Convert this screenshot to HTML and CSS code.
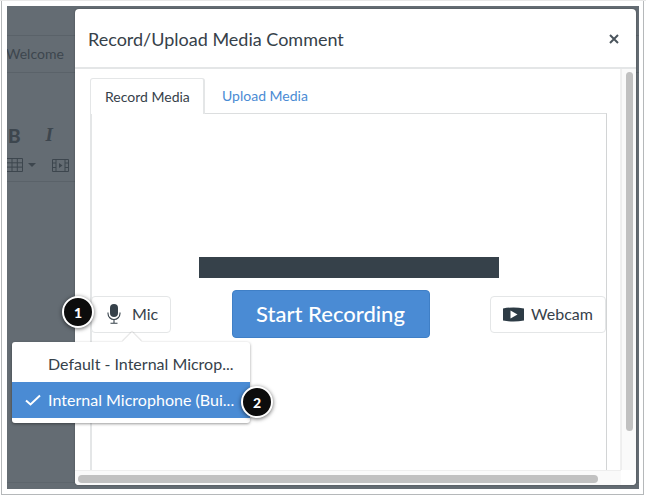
FILE: index.html
```html
<!DOCTYPE html>
<html lang="en">
<head>
<meta charset="utf-8">
<title>Record/Upload Media Comment</title>
<link rel="stylesheet" href="styles.css">
</head>
<body>
<div class="frame">
  <div class="screen">
    <div class="page">
      <div class="page-tab"><span>Welcome</span></div>
      <div class="editor-tools">
        <div class="tool-row tool-row-a"><b class="tool-b">B</b><i class="tool-i">I</i></div>
        <div class="tool-row tool-row-b">
          <svg class="tool-icon" width="16" height="14" viewBox="0 0 16 14"><path d="M0 .5h15.5v13H0M0 4.8h15.5M0 9.1h15.5M5 .5v13M10.3 .5v13" fill="none" stroke="#3d464e" stroke-width="1"/></svg>
          <svg class="tool-caret" width="8" height="4" viewBox="0 0 8 4"><path d="M0 0h8L4 4z" fill="#3d464e"/></svg>
          <svg class="tool-film" width="17" height="13" viewBox="0 0 17 13"><path d="M.5 .5h16v12H.5zM4 .5v12M13 .5v12M.5 4h3.500M.5 8.500h3.500M13 4h3.500M13 8.500h3.500" fill="none" stroke="#3d464e"/><path d="M7 4l3.500 2.500L7 9z" fill="#3d464e"/></svg>
        </div>
      </div>
      <div class="page-foot"></div>
    </div>

    <section class="dialog">
      <header class="dialog-head">
        <h1 class="dialog-title">Record/Upload Media Comment</h1>
        <svg class="close" width="10" height="10" viewBox="0 0 10 10"><path d="M1 1l8 8M9 1l-8 8" stroke="#4a545c" stroke-width="2" fill="none"/></svg>
      </header>
      <div class="dialog-scroll">
        <div class="dialog-body">
          <div class="tabs">
            <div class="tab tab-active">Record Media</div>
            <div class="tab tab-link">Upload Media</div>
          </div>
          <div class="panel">
            <div class="meter"></div>
            <div class="controls">
              <button class="btn btn-mic">
                <svg width="14" height="20" viewBox="0 0 14 20"><rect x="3" y="0" width="8" height="13" rx="4" fill="#36414a"/><path d="M1 8.500v1a6 6 0 0 0 12 0v-1M7 15.500V19M3.500 19.300h7" fill="none" stroke="#36414a" stroke-width="1.100"/></svg>
                <span class="btn-label">Mic</span>
              </button>
              <button class="btn-primary">Start Recording</button>
              <button class="btn btn-cam">
                <svg width="21" height="15" viewBox="0 0 21 15"><path d="M0 1.500Q10.500 -.5 21 1.500V13.500Q10.500 15.500 0 13.500z" fill="#2d3b45"/><path d="M7.500 3.500l7 4-7 4z" fill="#fff"/></svg>
                <span class="btn-label">Webcam</span>
              </button>
            </div>
          </div>
        </div>
        <div class="vbar"><div class="vthumb"></div></div>
        <div class="hbar"><div class="hthumb"></div></div>
        <div class="corner"></div>
      </div>
    </section>

    <div class="menu">
      <div class="menu-arrow"></div>
      <div class="menu-item menu-item-first">Default - Internal Microp...</div>
      <div class="menu-item menu-item-on">
        <svg class="check" width="16" height="12" viewBox="0 0 16 12"><path d="M1 6.500l4.500 4L15 1.500" fill="none" stroke="#fff" stroke-width="2"/></svg>
        <span class="menu-tight">Internal Microphone (Bui...</span>
      </div>
    </div>

    <div class="badge badge-one">1</div>
    <div class="badge badge-two">2</div>
  </div>
</div>
</body>
</html>
```
FILE: styles.css
```css
* { box-sizing: border-box; }
html, body { margin: 0; padding: 0; }
body { width: 646px; height: 497px; overflow: hidden; background: #fff; font-family: Lato, "Open Sans", sans-serif; color: #36414a; }

.frame {
  width: 646px; height: 497px;
  padding: 0 2px 2px 1px;
  border-top: 1px solid #e8e8e8;
}
.screen {
  position: relative;
  width: 643px; height: 494px;
  border: 1px solid #b5b8ba;
  border-top: 0;
  padding: 5px 4px 5px 5px;
  background: #fff;
}
.page {
  width: 100%; height: 100%;
  background: #646c73;
  color: #3d464e;
  overflow: hidden;
}
.page-tab {
  margin-top: 29px; height: 38px;
  border-top: 1px solid #5a6269; border-bottom: 1px solid #5a6269;
  font-size: 14px; line-height: 35px;
}
.page-tab span { display: block; margin-left: -1px; }
.editor-tools { width: 68px; height: 109px; padding-top: 50px; border-bottom: 1px solid #5a6269; }
.tool-row { display: flex; align-items: center; }
.tool-row-a { height: 24px; font-size: 19px; }
.tool-b { margin-left: 1px; font-family: Lato, sans-serif; font-weight: 900; }
.tool-i { margin-left: 25px; font-family: "Liberation Serif", serif; font-weight: 700; }
.tool-row-b { margin-top: 11px; }
.tool-caret { margin-left: 5px; }
.tool-film { margin-left: 16px; }
.page-foot { margin-top: 300px; height: 1px; background: #5d656c; }

.dialog {
  position: absolute; left: 73px; top: 8px;
  width: 561px; height: 476px;
  background: #fff;
  border-radius: 4px;
  box-shadow: 0 0 2px rgba(0,0,0,.35);
  display: flex; flex-direction: column;
  overflow: hidden;
}
.dialog-head {
  height: 60px; flex: none;
  border-bottom: 2px solid #e4e6e7;
  display: flex; align-items: center; justify-content: space-between;
  padding: 1px 17px 0 13px;
}
.dialog-title { margin: 0; font-size: 18px; font-weight: 400; color: #36414a; }
.close { flex: none; }

.dialog-scroll {
  flex: 1; min-height: 0;
  display: grid;
  grid-template-columns: 546px 15px;
  grid-template-rows: 401px 15px;
}
.dialog-body { padding: 9px 14px 0 15px; overflow: hidden; border-right: 1px solid #f0f0f0; }
.tabs { display: flex; height: 36px; position: relative; z-index: 1; }
.tab { height: 36px; font-size: 14px; line-height: 35px; padding: 0 15px; white-space: nowrap; }
.tab-active {
  width: 115px; padding-left: 14px;
  background: #fff; color: #36414a;
  border: 2px solid #e4e6e7; border-bottom: 0;
  border-radius: 3px 3px 0 0;
  border-width: 1px 2px 0 1px;
}
.tab-link { color: #4a8bd4; padding-left: 17px; }
.panel {
  margin-top: -1px;
  width: 517px; height: 400px;
  border: 1px solid #d2d4d5;
  border-left: 2px solid #e4e6e7;
  border-top: 1px solid #dcdedf;
  display: flex; flex-direction: column; align-items: center;
  padding-top: 143px;
}
.meter { width: 300px; height: 21px; background: #36414a; }
.controls {
  width: 100%;
  margin-top: 12px;
  display: flex; justify-content: space-between; align-items: center;
}
.btn {
  height: 37px; padding: 0;
  border: 1px solid #e4e6e7; border-radius: 4px;
  background: #fff; color: #36414a;
  font-family: inherit; font-size: 16px;
  display: flex; align-items: center; justify-content: center;
}
.btn-label { margin-top: -2px; }
.btn-mic { width: 80px; gap: 11px; margin-left: -1px; padding-left: 3px; }
.btn-cam { width: 116px; gap: 7px; }
.btn-primary {
  width: 198px; height: 48px; padding: 0 0 2px;
  background: #4a8bd4; color: #fff;
  border: 1px solid #3f7fc6; border-radius: 4px;
  font-family: inherit; font-size: 22px; font-weight: 500;
}

.vbar { background: #fafafa; border-left: 1px solid #eee; padding: 3px 3px 0 4px; }
.vthumb { height: 359px; background: #c1c1c1; border-radius: 4px; }
.hbar { background: #fafafa; border-top: 1px solid #eee; padding: 4px 0 0 3px; }
.hthumb { width: 520px; height: 8px; background: #c1c1c1; border-radius: 4px; }
.corner { background: #fff; }

.menu {
  position: absolute; left: 10px; top: 341px;
  width: 238px; height: 81px;
  background: #fff;
  border-radius: 3px;
  box-shadow: 0 1px 3px rgba(0,0,0,.4);
  padding-top: 1px;
  z-index: 3;
}
.menu-arrow {
  position: absolute; left: 113px; top: -7px;
  width: 14px; height: 14px;
  background: #fff;
  transform: rotate(45deg);
  box-shadow: -1px -1px 1px rgba(0,0,0,.12);
}
.menu-item {
  position: relative;
  height: 36px;
  padding-left: 36px;
  font-size: 16px; line-height: 36px;
  color: #36414a;
  white-space: nowrap;
}
.menu-item-first { height: 39px; line-height: 41px; }
.menu-item-on { background: #4a8bd4; color: #fff; }
.menu-tight { letter-spacing: .02px; }
.check { position: absolute; left: 13px; top: 12px; }

.badge {
  position: absolute;
  width: 32px; height: 32px; border-radius: 50%;
  background: #0c0c0c; color: #fff;
  border: 2px solid #fff;
  box-shadow: 0 1px 4px rgba(0,0,0,.6);
  font-size: 14px; font-weight: 900;
  display: flex; align-items: center; justify-content: center;
  z-index: 4;
}
.badge-one { left: 60px; top: 295px; }
.badge-two { left: 239px; top: 385px; }
```
